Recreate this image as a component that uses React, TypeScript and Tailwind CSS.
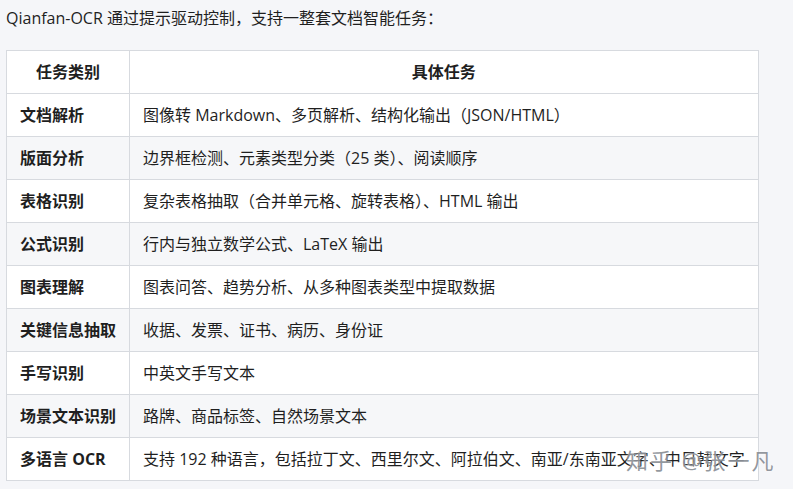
import React from "react";

const rows: [string, string][] = [
  ["文档解析", "图像转 Markdown、多页解析、结构化输出（JSON/HTML）"],
  ["版面分析", "边界框检测、元素类型分类（25 类）、阅读顺序"],
  ["表格识别", "复杂表格抽取（合并单元格、旋转表格）、HTML 输出"],
  ["公式识别", "行内与独立数学公式、LaTeX 输出"],
  ["图表理解", "图表问答、趋势分析、从多种图表类型中提取数据"],
  ["关键信息抽取", "收据、发票、证书、病历、身份证"],
  ["手写识别", "中英文手写文本"],
  ["场景文本识别", "路牌、商品标签、自然场景文本"],
  ["多语言 OCR", "支持 192 种语言，包括拉丁文、西里尔文、阿拉伯文、南亚/东南亚文字、中日韩文字"],
];

export default function App() {
  return (
    <div
      className="relative w-[793px] h-[489px] overflow-hidden bg-[#f5f6f9] text-[#1f1f1f]"
      style={{ fontFamily: '"Open Sans", "Noto Sans CJK SC", sans-serif' }}
    >
      <p className="pl-[6px] pt-[6px] h-[50px] text-[16px] leading-[24px]">
        Qianfan-OCR 通过提示驱动控制，支持一整套文档智能任务：
      </p>

      <table className="ml-[6px] w-[751px] border-collapse text-[16px]">
        <thead>
          <tr className="bg-white h-[43px]">
            <th className="w-[123px] border border-[#d7dadf] font-bold text-center">任务类别</th>
            <th className="border border-[#d7dadf] font-bold text-center">具体任务</th>
          </tr>
        </thead>
        <tbody>
          {rows.map(([cat, task], i) => (
            <tr key={cat} className={`h-[43px] ${i % 2 === 1 ? "bg-[#f6f7f9]" : "bg-white"}`}>
              <td className="border border-[#d7dadf] px-[13px] font-bold whitespace-nowrap">{cat}</td>
              <td className="border border-[#d7dadf] px-[13px] whitespace-nowrap">{task}</td>
            </tr>
          ))}
        </tbody>
      </table>

      {/* watermark */}
      <div className="absolute left-[626px] top-[445px] text-[22px] leading-[30px] text-[#80858d]/85 tracking-[2px] whitespace-nowrap [text-shadow:0_0_2px_rgba(255,255,255,0.9)]">
        知乎 @张一凡
      </div>
    </div>
  );
}
